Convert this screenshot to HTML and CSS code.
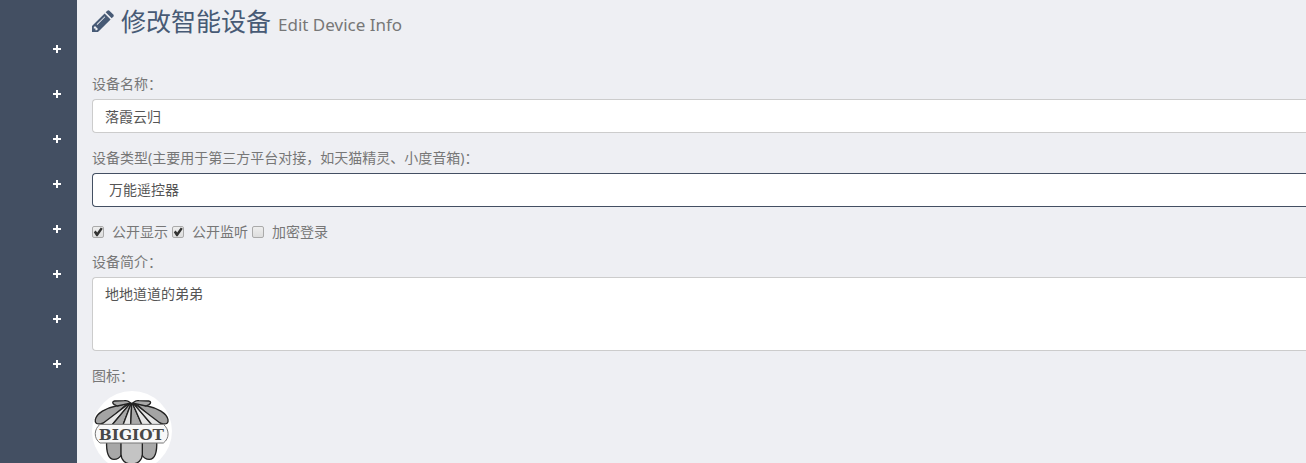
FILE: index.html
```html
<!DOCTYPE html>
<html lang="zh-CN">
<head>
<meta charset="utf-8">
<title>修改智能设备</title>
<link rel="stylesheet" href="styles.css">
</head>
<body>
<div class="app">
  <nav class="sidebar" aria-label="主菜单">
    <button class="toggle" type="button" aria-label="展开菜单 1"></button>
    <button class="toggle" type="button" aria-label="展开菜单 2"></button>
    <button class="toggle" type="button" aria-label="展开菜单 3"></button>
    <button class="toggle" type="button" aria-label="展开菜单 4"></button>
    <button class="toggle" type="button" aria-label="展开菜单 5"></button>
    <button class="toggle" type="button" aria-label="展开菜单 6"></button>
    <button class="toggle" type="button" aria-label="展开菜单 7"></button>
    <button class="toggle" type="button" aria-label="展开菜单 8"></button>
  </nav>
  <main class="content">
    <h1 class="title">
      <svg class="pencil" viewBox="0 0 22 22" aria-hidden="true">
        <path fill="#475a75" fill-rule="evenodd" d="M0 22V16L12.600 3.400L18.600 9.400L6 22ZM1.800 17.200V18.600H3.400V20.200H4.800L6 19L3 16ZM4.700 14.300L5.300 14.900L13.200 7L12.600 6.400Z"/>
        <path fill="#475a75" d="M13.700 2.300L15.300 .7Q16.400 -.2 17.400 .7L21.300 4.600Q22.200 5.600 21.300 6.700L19.700 8.300Z"/>
      </svg>
      <span>修改智能设备</span>
      <small class="subtitle">Edit Device Info</small>
    </h1>
    <form class="form">
      <div class="group">
        <label for="name">设备名称：</label>
        <input class="control" id="name" type="text" value="落霞云归">
      </div>
      <div class="group">
        <label for="type">设备类型(主要用于第三方平台对接，如天猫精灵、小度音箱)：</label>
        <select class="control control-active" id="type"><option>万能遥控器</option></select>
      </div>
      <div class="checks">
        <label class="check"><input type="checkbox" checked>公开显示</label>
        <label class="check"><input type="checkbox" checked>公开监听</label>
        <label class="check"><input type="checkbox">加密登录</label>
      </div>
      <div class="group">
        <label for="intro">设备简介：</label>
        <textarea class="control area" id="intro">地地道道的弟弟</textarea>
      </div>
      <div class="group">
        <span class="caption">图标：</span>
        <svg class="logo" viewBox="0 0 240 240" role="img" aria-label="BIGIOT">
          <circle cx="120" cy="120" r="120" fill="#fff"/>
          <g stroke="#222" stroke-width="4" stroke-linejoin="round">
            <path fill="#a8a8a8" d="M44 150C42 184 50 205 66 205C77 205 84 199 88 192V150Z"/>
            <path fill="#a8a8a8" d="M194 150C196 184 188 205 172 205C161 205 154 199 150 192V150Z"/>
            <path fill="#c4c4c4" d="M87 150V190C87 206 100 219 119 219C138 219 151 206 151 190V150Z"/>
            <path fill="#a4a4a4" d="M108 36L72 45C42 51 14 66 10 86C8 96 14 100 26 98L44 94Z"/>
            <path fill="#a4a4a4" d="M130 36L166 45C196 51 224 66 228 86C230 96 224 100 212 98L194 94Z"/>
            <path fill="#e6e6e6" d="M110 38L26 102H60L114 38Z"/>
            <path fill="#a8a8a8" d="M114 38L60 102H93L117 38Z"/>
            <path fill="#e6e6e6" d="M117 38L93 102H116L119 38Z"/>
            <path fill="#a8a8a8" d="M119 38L116 102H150L122 38Z"/>
            <path fill="#e6e6e6" d="M122 38L150 102H180L125 38Z"/>
            <path fill="#e6e6e6" d="M125 38L180 102H212L128 38Z"/>
            <path fill="#a8a8a8" d="M119 38L107 30Q103 28 97 29L68 30C60 31 61 37 67 41L76 45L108 38Z"/>
            <path fill="#a8a8a8" d="M119 38L131 30Q135 28 141 29L170 30C178 31 177 37 171 41L162 45L130 38Z"/>
          </g>
          <path fill="#f8f8f8" stroke="#777" stroke-width="3" d="M24 100C6 114 4 142 24 156H214C234 142 232 114 214 100Z"/>
          <text class="logo-text" x="118" y="146" text-anchor="middle">BIGIOT</text>
        </svg>
      </div>
    </form>
  </main>
</div>
</body>
</html>
```

FILE: styles.css
```css
* { box-sizing: border-box; }

body {
  margin: 0;
  background: #eeeff3;
  color: #777;
  font: 14px/20px "Noto Sans", "Noto Sans CJK SC", sans-serif;
}

.app {
  display: flex;
  height: 100vh;
  overflow: hidden;
}

.sidebar {
  flex: 0 0 77px;
  padding-top: 26px;
  background: #434f62;
}

.toggle {
  display: flex;
  align-items: center;
  justify-content: flex-end;
  width: 100%;
  height: 45px;
  padding: 0 16px;
  border: 0;
  background: none;
}

.toggle::before {
  content: "";
  width: 8px;
  height: 8px;
  background:
    linear-gradient(#fff, #fff) center / 8px 2px no-repeat,
    linear-gradient(#fff, #fff) center / 2px 8px no-repeat;
}

.content {
  flex: 1;
  min-width: 0;
  padding-left: 15px;
}

.title {
  display: flex;
  align-items: baseline;
  gap: 7px;
  height: 42px;
  margin: 0 0 32px;
  color: #475a75;
  font-size: 25px;
  font-weight: 400;
  line-height: 42px;
}

.pencil {
  align-self: center;
  width: 22px;
  height: 22px;
}

.subtitle {
  color: #777;
  font-size: 17px;
}

.group { margin-bottom: 15px; }

.group > label,
.caption {
  display: block;
  margin-bottom: 5px;
}

.control {
  display: block;
  width: 100%;
  height: 34px;
  padding: 6px 12px;
  border: 1px solid #ccc;
  border-right: 0;
  border-radius: 4px 0 0 4px;
  outline: 0;
  background: #fff;
  color: #555;
  font: inherit;
  appearance: none;
}

.control-active {
  padding-left: 16px;
  border-color: #434f62;
}

.area {
  height: 74px;
  resize: none;
}

.checks {
  display: flex;
  gap: 4px;
  margin-bottom: 10px;
}

.check {
  display: flex;
  align-items: center;
  gap: 8px;
}

.check input {
  width: 12px;
  height: 12px;
  margin: 0;
  border: 1px solid #aaa;
  border-radius: 2px;
  background: linear-gradient(#eee, #ddd);
  appearance: none;
}

.check input:checked::before {
  content: "";
  display: block;
  width: 10px;
  height: 10px;
  background: #333;
  clip-path: polygon(8% 52%, 26% 36%, 42% 54%, 78% 4%, 98% 18%, 46% 92%, 34% 92%);
}

.logo {
  display: block;
  width: 80px;
  height: 80px;
}

.logo-text {
  fill: #484848;
  font: 700 46px "DejaVu Serif", serif;
}
```
